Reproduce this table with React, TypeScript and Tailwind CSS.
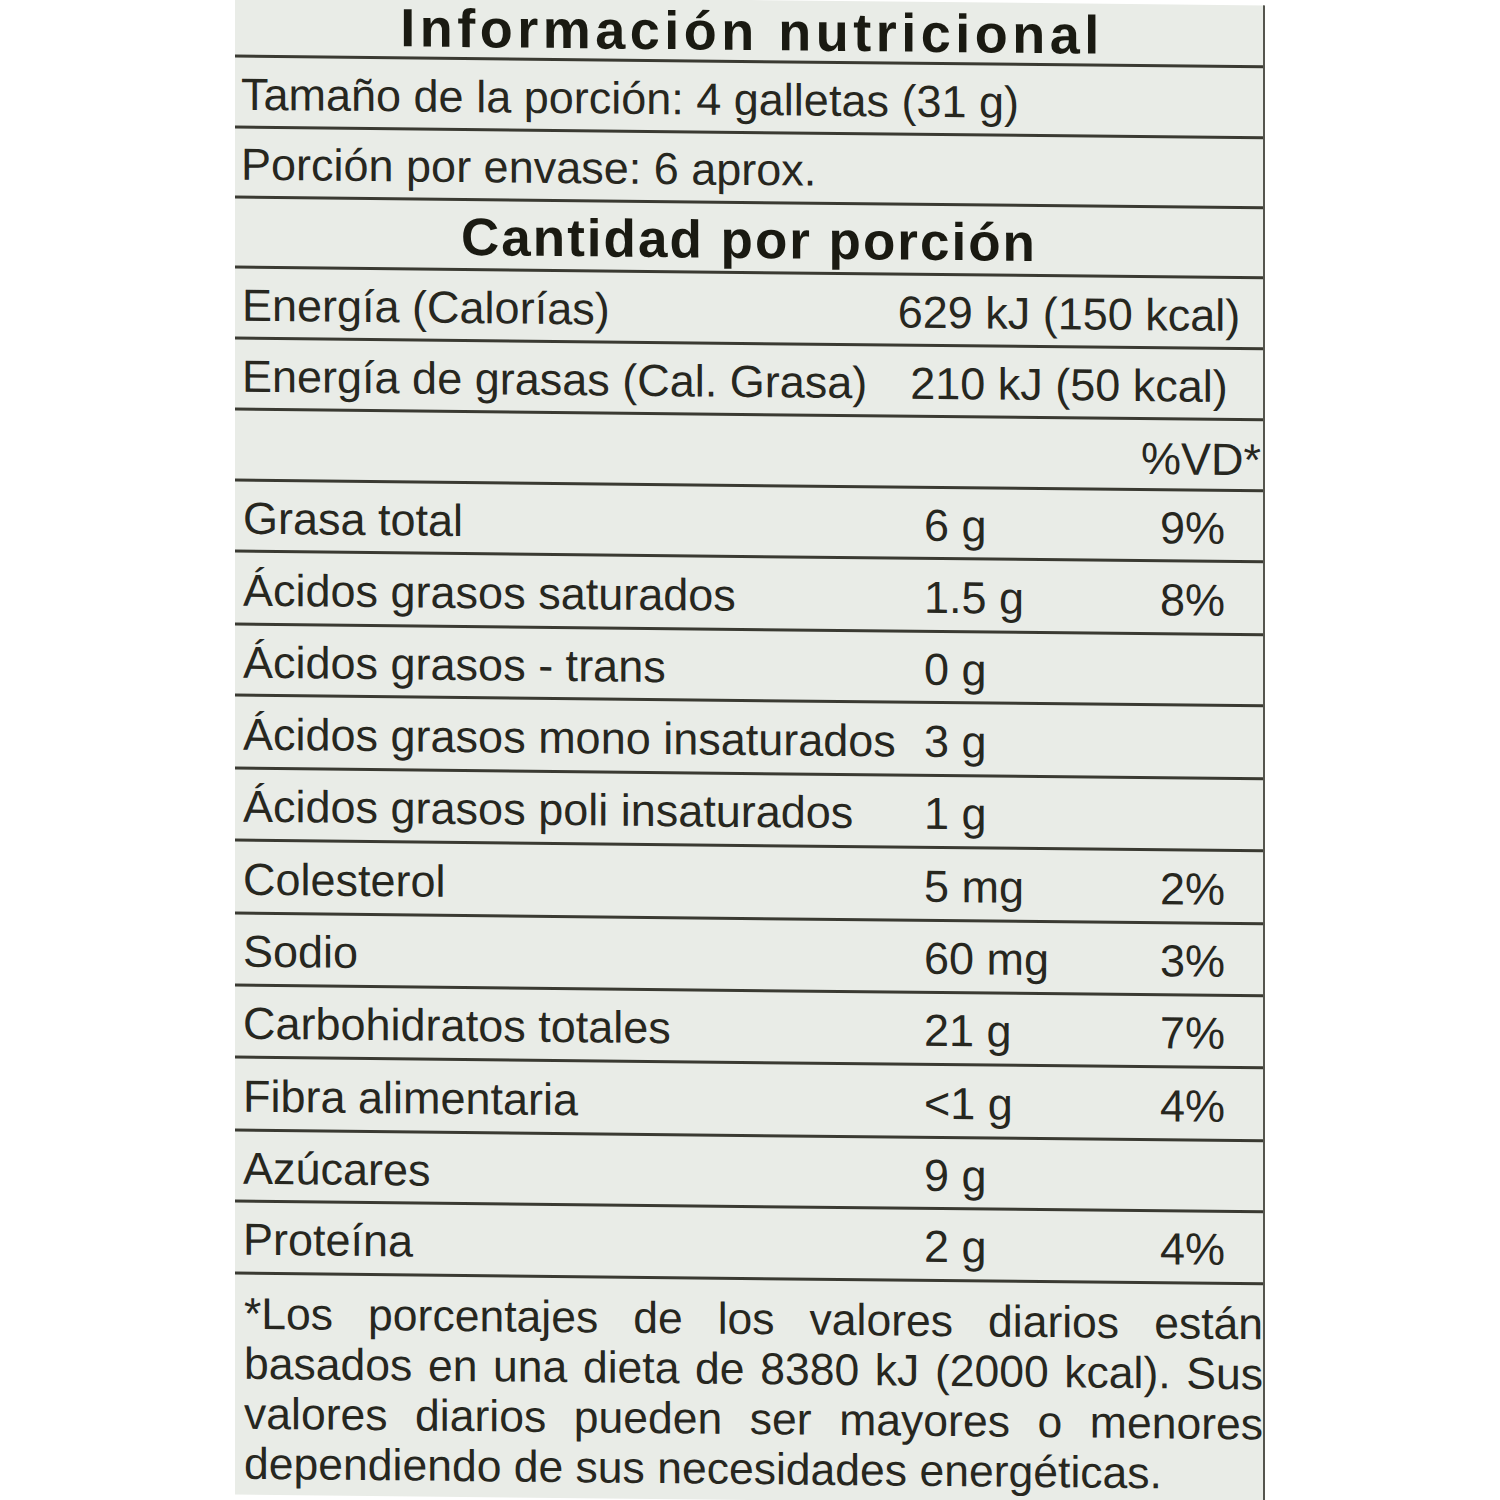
import React from "react";

type Nutrient = {
  label: string;
  amount: string;
  pct?: string;
  h: string;
};

const nutrients: Nutrient[] = [
  { label: "Grasa total", amount: "6 g", pct: "9%", h: "h-[71px]" },
  { label: "Ácidos grasos saturados", amount: "1.5 g", pct: "8%", h: "h-[73px]" },
  { label: "Ácidos grasos - trans", amount: "0 g", h: "h-[71px]" },
  { label: "Ácidos grasos mono insaturados", amount: "3 g", h: "h-[73px]" },
  { label: "Ácidos grasos poli insaturados", amount: "1 g", h: "h-[72px]" },
  { label: "Colesterol", amount: "5 mg", pct: "2%", h: "h-[73px]" },
  { label: "Sodio", amount: "60 mg", pct: "3%", h: "h-[72px]" },
  { label: "Carbohidratos totales", amount: "21 g", pct: "7%", h: "h-[72px]" },
  { label: "Fibra alimentaria", amount: "<1 g", pct: "4%", h: "h-[73px]" },
  { label: "Azúcares", amount: "9 g", h: "h-[71px]" },
  { label: "Proteína", amount: "2 g", pct: "4%", h: "h-[72px]" },
];

const rule = "border-b-[3px] border-[#3a3a32]";

function NutrientRow({ n }: { n: Nutrient }) {
  return (
    <div className={`${n.h} ${rule} flex items-center pt-[4px] pl-[8px]`}>
      <div className="w-[681px] whitespace-nowrap">{n.label}</div>
      <div className="w-[236px] whitespace-nowrap">{n.amount}</div>
      <div className="w-[64px] whitespace-nowrap">{n.pct}</div>
    </div>
  );
}

export default function App() {
  return (
    <div className="w-[1500px] h-[1500px] bg-white overflow-hidden flex">
      <div className="ml-[235px] w-[1030px] h-[1500px] bg-[#e9ece7] border-r-2 border-[#55554e] skew-y-[0.6deg] flex flex-col text-[45px] leading-none text-[#27271f] font-['Liberation_Sans',Arial,sans-serif]">
        {/* Header */}
        <div className={`h-[63px] ${rule} flex justify-center items-start pt-[6px]`}>
          <h1 className="text-[54px] font-bold tracking-[4.5px] text-[#1a1a12] leading-[50px] pl-[6px]">
            Información nutricional
          </h1>
        </div>
        <div className={`h-[71px] ${rule} flex items-center pt-[4px] pl-[6px] whitespace-nowrap`}>
          Tamaño de la porción: 4 galletas (31 g)
        </div>
        <div className={`h-[70px] ${rule} flex items-center pt-[4px] pl-[6px] whitespace-nowrap`}>
          Porción por envase: 6 aprox.
        </div>
        <div className={`h-[70px] ${rule} flex justify-center items-center pt-[4px]`}>
          <h2 className="text-[53px] font-bold tracking-[2px] text-[#1a1a12] leading-none">
            Cantidad por porción
          </h2>
        </div>

        {/* Energy */}
        <div className={`h-[71px] ${rule} flex items-center pt-[4px] pl-[7px] pr-[4px] justify-between`}>
          <span className="whitespace-nowrap">Energía (Calorías)</span>
          <span className="w-[380px] text-center whitespace-nowrap">629 kJ (150 kcal)</span>
        </div>
        <div className={`h-[71px] ${rule} flex items-center pt-[4px] pl-[7px] pr-[4px] justify-between`}>
          <span className="whitespace-nowrap">Energía de grasas (Cal. Grasa)</span>
          <span className="w-[380px] text-center whitespace-nowrap">210 kJ (50 kcal)</span>
        </div>
        <div className={`h-[71px] ${rule} flex items-center justify-end pt-[8px] pr-[2px]`}>
          <span>%VD*</span>
        </div>

        {/* Nutrients */}
        {nutrients.map((n) => (
          <NutrientRow key={n.label} n={n} />
        ))}

        {/* Footnote */}
        <div className="flex-1 pt-[14px] pl-[9px] text-[44.5px] leading-[50px]">
          <p className="text-justify [text-align-last:justify] whitespace-nowrap">
            *Los porcentajes de los valores diarios están
          </p>
          <p className="text-justify [text-align-last:justify] whitespace-nowrap">
            basados en una dieta de 8380 kJ (2000 kcal). Sus
          </p>
          <p className="text-justify [text-align-last:justify] whitespace-nowrap">
            valores diarios pueden ser mayores o menores
          </p>
          <p className="whitespace-nowrap">dependiendo de sus necesidades energéticas.</p>
        </div>
      </div>
    </div>
  );
}
